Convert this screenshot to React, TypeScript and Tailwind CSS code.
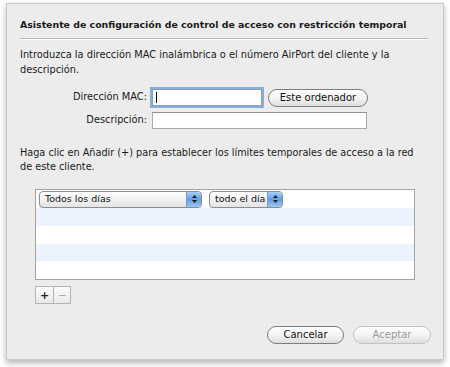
import React from "react";

const font = { fontFamily: '"DejaVu Sans", "Liberation Sans", sans-serif' };

function Stepper() {
  return (
    <div className="flex h-full w-[15px] flex-col items-center justify-center gap-[2px] rounded-r-[4px] bg-gradient-to-b from-[#a9cdf5] via-[#5d9ee8] to-[#9cc8f4] border-l border-[#7a9cc4]">
      <svg width="5" height="3" viewBox="0 0 5 3"><path d="M0 3 L2.5 0 L5 3Z" fill="#1a1a1a" /></svg>
      <svg width="5" height="3" viewBox="0 0 5 3"><path d="M0 0 L2.5 3 L5 0Z" fill="#1a1a1a" /></svg>
    </div>
  );
}

function Popup({ label, w }: { label: string; w: string }) {
  return (
    <div className={`flex h-[17px] ${w} items-center rounded-[4px] border border-[#8c8c8c] bg-gradient-to-b from-white to-[#e4e4e4] shadow-[0_1px_0_rgba(0,0,0,0.12)]`}>
      <span className="flex-1 pl-[5px] text-[9.5px] leading-none text-[#111]">{label}</span>
      <Stepper />
    </div>
  );
}

function PillButton({ label, w, disabled }: { label: string; w: string; disabled?: boolean }) {
  return (
    <div
      className={`flex h-[18px] ${w} items-center justify-center rounded-full border ${
        disabled ? "border-[#c2c2c2] text-[#9a9a9a]" : "border-[#7d7d7d] text-[#111]"
      } bg-gradient-to-b from-white via-[#f4f4f4] to-[#dedede] text-[10px] leading-none`}
    >
      {label}
    </div>
  );
}

export default function App() {
  return (
    <div className="h-[367px] w-[450px] bg-white pl-[6px] pt-[3px]" style={font}>
      <div className="flex h-[357px] w-[438px] flex-col border border-[#c9c9c9] bg-[#ececec] pl-[13px] pr-[15px] shadow-[0_3px_6px_rgba(0,0,0,0.3)]">
        <div className="mt-[15px] h-[12px] text-[9.4px] font-bold leading-[12px] text-[#1a1a1a]">
          Asistente de configuración de control de acceso con restricción temporal
        </div>
        <div className="mt-[7px] h-[2px] border-t border-b border-t-[#b9b9b9] border-b-[#fafafa]" />
        <p className="mt-[7px] text-[9.8px] leading-[15px] text-[#1a1a1a]">
          Introduzca la dirección MAC inalámbrica o el número AirPort del cliente y la
          <br />
          descripción.
        </p>
        <div className="mt-[11px] flex h-[19px] items-center">
          <div className="w-[132px] pr-[5px] text-right text-[9.8px] text-[#1a1a1a]">Dirección MAC:</div>
          <div className="flex h-[17px] w-[110px] items-center border border-[#8e9db3] bg-white pl-[3px] shadow-[0_0_0_2px_#86afe0]">
            <div className="h-[11px] w-px bg-black" />
          </div>
          <div className="ml-[6px]">
            <PillButton label="Este ordenador" w="w-[100px]" />
          </div>
        </div>
        <div className="mt-[4px] flex h-[18px] items-center">
          <div className="w-[132px] pr-[5px] text-right text-[9.8px] text-[#1a1a1a]">Descripción:</div>
          <div className="h-[17px] w-[215px] border border-[#a9a9a9] border-t-[#8f8f8f] bg-white" />
        </div>
        <p className="mt-[17px] text-[9.7px] leading-[14px] text-[#1a1a1a]">
          Haga clic en Añadir (+) para establecer los límites temporales de acceso a la red
          <br />
          de este cliente.
        </p>
        <div className="ml-[15px] mt-[15px] flex h-[91px] w-[380px] flex-col border border-[#a3a3a3] bg-white">
          <div className="flex h-[18px] items-center gap-[7px] bg-white pl-[3px]">
            <Popup label="Todos los días" w="w-[163px]" />
            <Popup label="todo el día" w="w-[74px]" />
          </div>
          <div className="h-[18px] bg-[#edf3fe]" />
          <div className="h-[18px] bg-white" />
          <div className="h-[17px] bg-[#edf3fe]" />
          <div className="flex-1 bg-white" />
        </div>
        <div className="ml-[15px] mt-[6px] flex h-[18px] w-[36px] border border-[#b3b3b3] bg-gradient-to-b from-[#fbfbfb] to-[#e9e9e9]">
          <div className="flex w-[18px] items-center justify-center border-r border-[#b3b3b3] text-[11px] font-bold leading-none text-[#222]">+</div>
          <div className="flex flex-1 items-center justify-center text-[11px] leading-none text-[#a8a8a8]">−</div>
        </div>
        <div className="mr-[-3px] mt-[22px] flex justify-end gap-[9px]">
          <PillButton label="Cancelar" w="w-[77px]" />
          <PillButton label="Aceptar" w="w-[78px]" disabled />
        </div>
      </div>
    </div>
  );
}
